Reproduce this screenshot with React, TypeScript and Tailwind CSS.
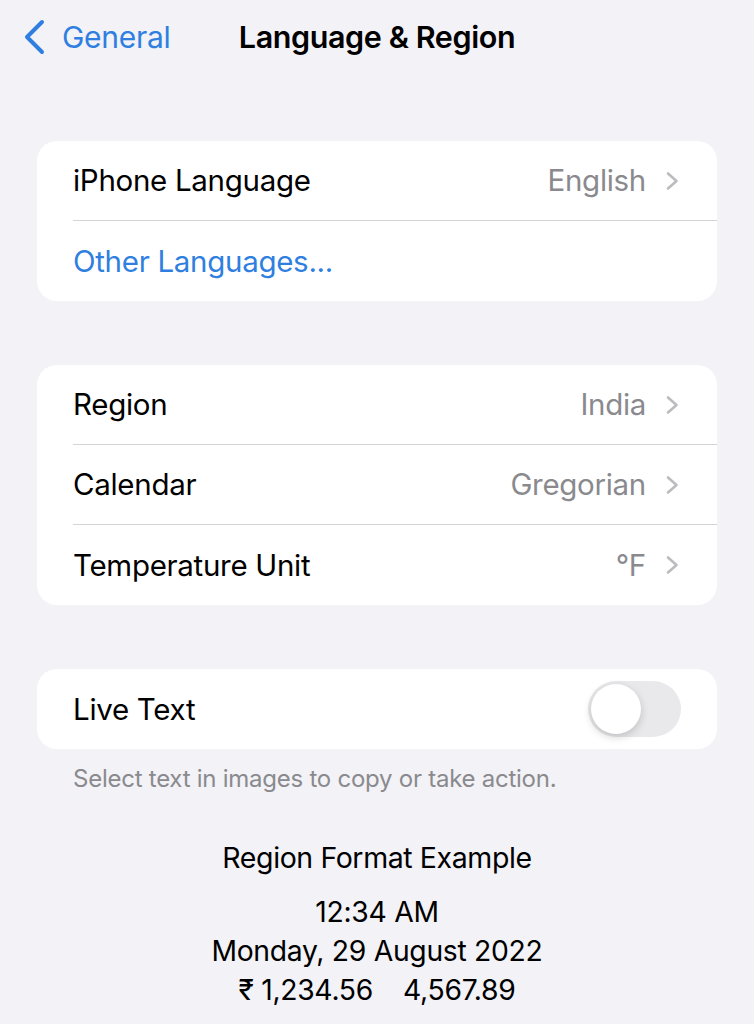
const font = { fontFamily: "Inter, 'Noto Sans', sans-serif" };

type Row = { label: string; value?: string; link?: boolean };

const Disclosure = () => (
  <svg width="15" height="20" viewBox="0 0 15 20" className="ml-[19px]" fill="none">
    <path
      d="M3 2.5 L11.5 10 L3 17.5"
      stroke="#bcbcc0"
      strokeWidth="2.6"
      strokeLinecap="round"
      strokeLinejoin="round"
    />
  </svg>
);

const Card = ({ rows }: { rows: Row[] }) => (
  <div className="mx-[37px] rounded-[20px] bg-white">
    {rows.map((row, i) => (
      <div key={row.label} className="pl-[36px]">
        <div
          className={`flex h-[80px] items-center pr-[37px] ${
            i < rows.length - 1 ? "border-b border-[#d4d4d8]" : ""
          }`}
        >
          <span
            className={`flex-1 text-[29.5px] tracking-[-0.3px] ${
              row.link ? "text-[#2f7fe0]" : "text-black"
            }`}
          >
            {row.label}
          </span>
          {row.value && (
            <>
              <span className="text-[29.5px] tracking-[-0.3px] text-[#8a8a8e]">
                {row.value}
              </span>
              <Disclosure />
            </>
          )}
        </div>
      </div>
    ))}
  </div>
);

export default function App() {
  return (
    <div className="min-h-[1024px] w-[754px] bg-[#f2f2f7] pb-8" style={font}>
      {/* Nav bar */}
      <div className="relative flex h-[74px] items-center">
        <div className="flex items-center pl-[22px] text-[#2f7fe0]">
          <svg width="24" height="36" viewBox="0 0 24 36" fill="none">
            <path
              d="M20 3 L5 18 L20 33"
              stroke="#2f7fe0"
              strokeWidth="4"
              strokeLinecap="round"
              strokeLinejoin="round"
            />
          </svg>
          <span className="ml-[16px] text-[30px] tracking-[-0.3px]">General</span>
        </div>
        <span className="pointer-events-none absolute left-0 right-0 text-center text-[30.5px] font-semibold tracking-[-0.4px] text-black">
          Language &amp; Region
        </span>
      </div>

      <div className="mt-[67px]">
        <Card
          rows={[
            { label: "iPhone Language", value: "English" },
            { label: "Other Languages...", link: true },
          ]}
        />
      </div>

      <div className="mt-[64px]">
        <Card
          rows={[
            { label: "Region", value: "India" },
            { label: "Calendar", value: "Gregorian" },
            { label: "Temperature Unit", value: "°F" },
          ]}
        />
      </div>

      {/* Live Text */}
      <div className="mx-[37px] mt-[64px] flex h-[80px] items-center rounded-[20px] bg-white pl-[36px] pr-[36px]">
        <span className="flex-1 text-[29.5px] tracking-[-0.3px] text-black">
          Live Text
        </span>
        <div className="flex h-[56px] w-[93px] items-center rounded-full bg-[#e9e9eb] p-[3px]">
          <div className="h-[50px] w-[50px] rounded-full bg-white shadow-[0_3px_8px_rgba(0,0,0,0.18)]" />
        </div>
      </div>
      <p className="mt-[12px] pl-[73px] text-[24px] tracking-[-0.25px] text-[#8a8a8e]">
        Select text in images to copy or take action.
      </p>

      {/* Region format example */}
      <div className="mt-[40px] flex flex-col items-center text-black">
        <span className="text-[28.5px] tracking-[-0.4px]">Region Format Example</span>
        <div className="mt-[13px] flex flex-col items-center text-[28.3px] leading-[39px] tracking-[-0.3px]">
          <span>12:34 AM</span>
          <span>Monday, 29 August 2022</span>
          <span>
            ₹ 1,234.56<span className="ml-[30px]">4,567.89</span>
          </span>
        </div>
      </div>
    </div>
  );
}
